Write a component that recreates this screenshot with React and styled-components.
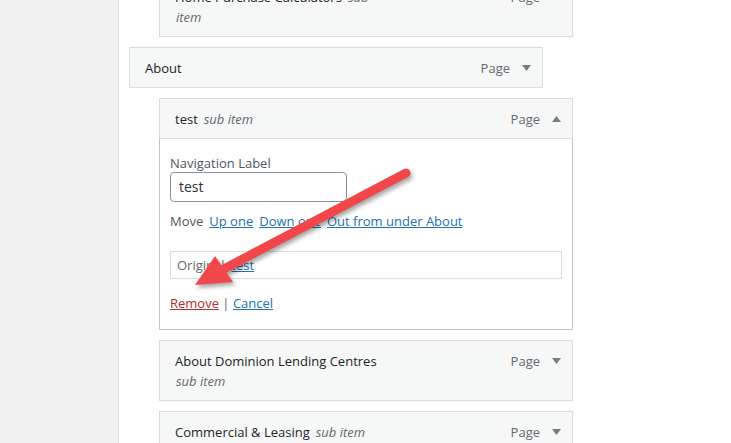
import React from 'react'
import styled, { createGlobalStyle } from 'styled-components'

const Global = createGlobalStyle`
  html, body {
    margin: 0;
    padding: 0;
    background: #fff;
    overflow: hidden;
  }
  body {
    font-family: "Open Sans", "Noto Sans", sans-serif;
    font-size: 13px;
    color: #1d2327;
  }
`

const StPage = styled.div`
  position: relative;
  display: flex;
  width: 731px;
  height: 443px;
  overflow: hidden;
`

const StSide = styled.div`
  width: 118px;
  flex-shrink: 0;
  background-color: #f0f0f1;
  border-right: 1px solid #dcdcde;
`

const StMain = styled.div`
  flex: 1;
  background-color: #fff;
`

const StList = styled.div`
  display: flex;
  flex-direction: column;
  gap: 10px;
  margin-top: -24px;
`

const StItem = styled.div`
  width: 414px;
  margin-left: ${(p) => 10 + p.depth * 30}px;
`

const StHandle = styled.div`
  display: flex;
  justify-content: space-between;
  align-items: flex-start;
  box-sizing: border-box;
  padding: 10px 0 9px 15px;
  background-color: #f6f7f7;
  border: 1px solid #dcdcde;
  line-height: 20px;
`

const StTitle = styled.div`
  width: 210px;
`

const StName = styled.span`
  font-weight: 500;
  color: #1d2327;
`

const StSub = styled.span`
  font-style: italic;
  color: #646970;
  margin-left: 6px;
`

const StSubLine = styled.div`
  font-style: italic;
  color: #646970;
  padding-left: 1px;
`

const StControls = styled.div`
  display: flex;
  align-items: center;
  height: 20px;
  color: #646970;
`

const StToggle = styled.span`
  display: flex;
  justify-content: center;
  width: 32px;
`

const StSettings = styled.div`
  box-sizing: border-box;
  padding: 15px 10px 16px 10px;
  border: 1px solid #c3c4c7;
  border-top: none;
`

const StLabel = styled.div`
  line-height: 18px;
  color: #50575e;
`

const StInput = styled.div`
  box-sizing: border-box;
  width: 177px;
  height: 30px;
  padding: 0 8px;
  border: 1px solid #8c8f94;
  border-radius: 4px;
  font-size: 14px;
  line-height: 28px;
  color: #2c3338;
`

const StMove = styled.div`
  display: flex;
  gap: 6px;
  margin-top: 9px;
  line-height: 20px;
  color: #50575e;
`

const StLink = styled.a`
  color: ${(p) => (p.danger ? '#b32d2e' : '#2271b1')};
  text-decoration: underline;
  cursor: pointer;
`

const StOriginal = styled.div`
  box-sizing: border-box;
  margin-top: 20px;
  height: 28px;
  padding: 0 6px;
  border: 1px solid #dcdcde;
  line-height: 26px;
  color: #646970;
`

const StActions = styled.div`
  margin-top: 14px;
  line-height: 20px;
  color: #646970;
`

const StArrow = styled.svg`
  position: absolute;
  left: 0;
  top: 0;
  pointer-events: none;
  filter: drop-shadow(2px 3px 2px rgba(0, 0, 0, 0.35));
`

function Caret({ up }) {
  return (
    <svg width="9" height="6" viewBox="0 0 9 6">
      {up
        ? <polygon points="0,6 4.5,0 9,6" fill="#787c82" />
        : <polygon points="0,0 9,0 4.5,6" fill="#787c82" />}
    </svg>
  )
}

function Handle({ name, sub, subLine, open }) {
  return (
    <StHandle>
      <StTitle>
        <StName>{name}</StName>
        {sub && <StSub>{sub}</StSub>}
        {subLine && <StSubLine>{subLine}</StSubLine>}
      </StTitle>
      <StControls>
        Page
        <StToggle><Caret up={open} /></StToggle>
      </StControls>
    </StHandle>
  )
}

function App() {
  return (
    <>
      <Global />
      <StPage>
        <StSide />
        <StMain>
          <StList>
            <StItem depth={1}>
              <Handle name="Home Purchase Calculators" sub="sub" subLine="item" />
            </StItem>
            <StItem depth={0}>
              <Handle name="About" />
            </StItem>
            <StItem depth={1}>
              <Handle name="test" sub="sub item" open />
              <StSettings>
                <StLabel>Navigation Label</StLabel>
                <StInput>test</StInput>
                <StMove>
                  Move
                  <StLink>Up one</StLink>
                  <StLink>Down one</StLink>
                  <StLink>Out from under About</StLink>
                </StMove>
                <StOriginal>
                  Original: <StLink>test</StLink>
                </StOriginal>
                <StActions>
                  <StLink danger>Remove</StLink> | <StLink>Cancel</StLink>
                </StActions>
              </StSettings>
            </StItem>
            <StItem depth={1}>
              <Handle name="About Dominion Lending Centres" subLine="sub item" />
            </StItem>
            <StItem depth={1}>
              <Handle name="Commercial & Leasing" sub="sub item" />
            </StItem>
          </StList>
        </StMain>
        <StArrow width="731" height="443" viewBox="0 0 731 443">
          <line x1="406" y1="173" x2="222" y2="270" stroke="#f2474a" strokeWidth="9" strokeLinecap="round" />
          <polygon points="195,285 215,256 233,282" fill="#f2474a" />
        </StArrow>
      </StPage>
    </>
  )
}

export default App
